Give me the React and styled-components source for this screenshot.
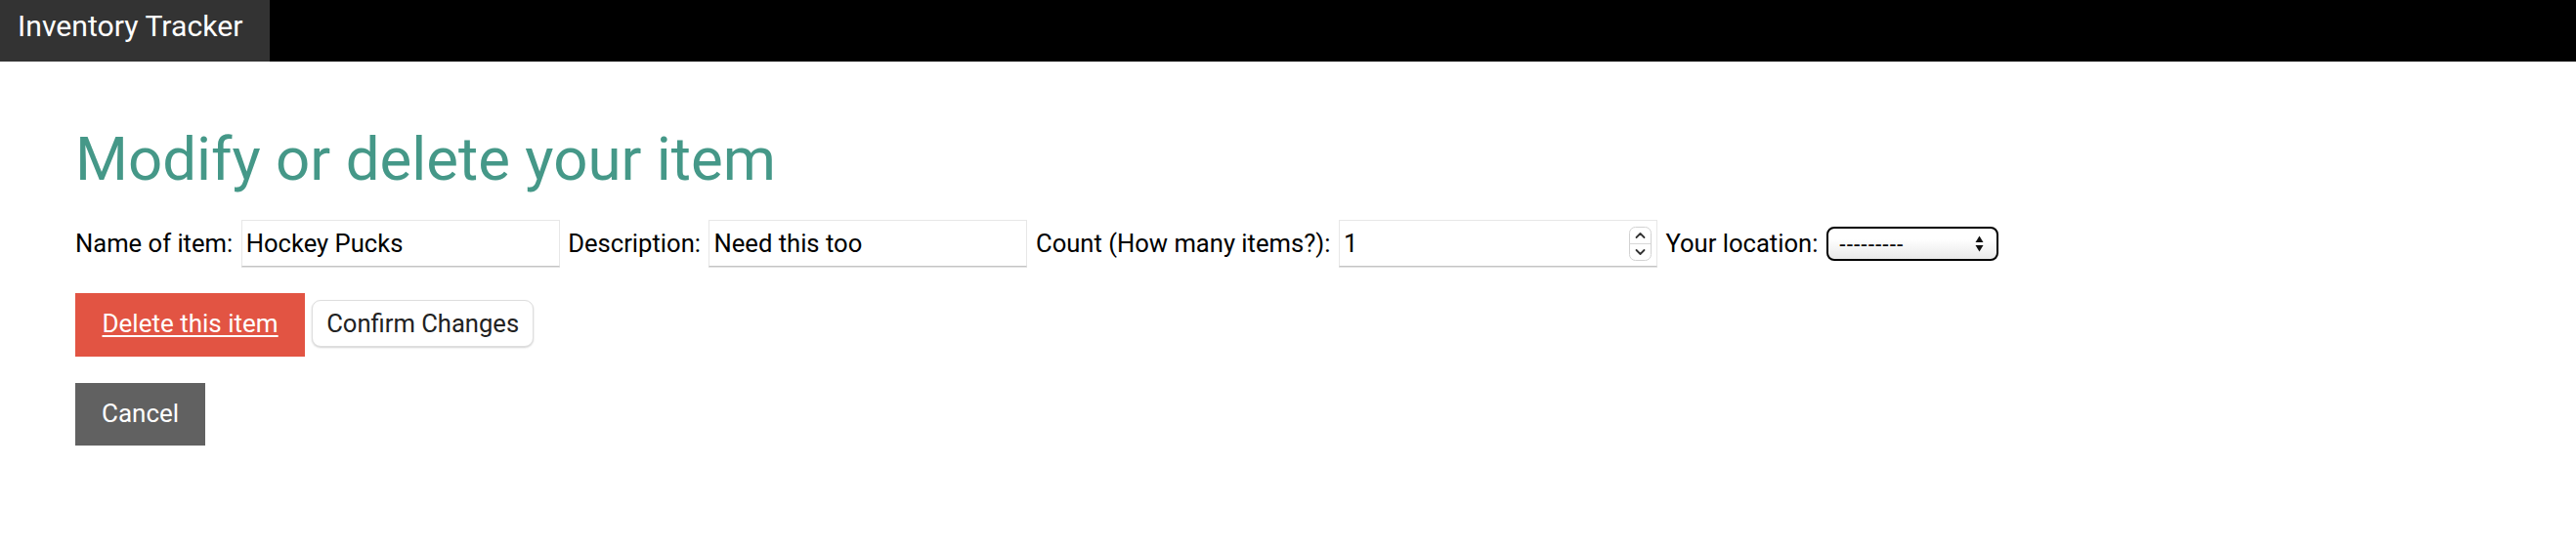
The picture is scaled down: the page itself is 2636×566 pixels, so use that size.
import React from "react";
import styled, { createGlobalStyle } from "styled-components";

const Global = createGlobalStyle`
  html, body { margin: 0; padding: 0; background: #fff; }
  body { font-family: Roboto, "Liberation Sans", Arial, sans-serif; color: #000; }
  * { box-sizing: border-box; }
`;

const NavBar = styled.nav`
  display: flex;
  height: 63px;
  background: #000;
`;

const Brand = styled.a`
  display: block;
  height: 63px;
  width: 276px;
  padding: 9px 0 0 18px;
  background: #333;
  color: #fff;
  font-size: 30.2px;
  line-height: normal;
  text-decoration: none;
  white-space: nowrap;
`;

const Main = styled.main`
  padding: 64px 77px 0;
  display: flex;
  flex-direction: column;
  align-items: flex-start;
`;

const Title = styled.h1`
  margin: 0;
  font-size: 61.8px;
  line-height: 72px;
  font-weight: 400;
  color: #459888;
`;

const Form = styled.form`
  display: flex;
  flex-direction: column;
  align-items: flex-start;
`;

const FieldRow = styled.div`
  margin-top: 26px;
  display: flex;
  align-items: center;
  gap: 8.5px;
  font-size: 25.6px;
`;

const Label = styled.label`
  white-space: nowrap;
`;

const Field = styled.div`
  display: flex;
  align-items: center;
  gap: 8.5px;
`;

const TextInput = styled.input`
  width: 326px;
  height: 48px;
  padding: 0 4px;
  border: 1px solid #e7e7e7;
  border-bottom-color: #c4c4c4;
  box-shadow: 0 1px 0 #e2e2e2;
  font-family: Roboto, "Liberation Sans", Arial, sans-serif;
  font-size: 25.6px;
  color: #000;
  background: #fff;
  outline: none;
`;

const NumberBox = styled.div`
  width: 326px;
  height: 48px;
  display: flex;
  align-items: center;
  padding: 0 5px 0 4px;
  border: 1px solid #e7e7e7;
  border-bottom-color: #c4c4c4;
  box-shadow: 0 1px 0 #e2e2e2;
  background: #fff;
`;

const BareInput = styled.input`
  flex: 1;
  min-width: 0;
  height: 100%;
  border: none;
  padding: 0;
  outline: none;
  font-family: Roboto, "Liberation Sans", Arial, sans-serif;
  font-size: 25.6px;
  color: #000;
  background: transparent;
`;

const Stepper = styled.svg`
  display: block;
  flex: none;
`;

const SelectBox = styled.div`
  width: 176px;
  height: 35px;
  display: flex;
  align-items: center;
  padding: 0 13px 0 11px;
  border: 2px solid #000;
  border-radius: 8px;
  background: linear-gradient(#ffffff, #ffffff 35%, #e9e9e9);
`;

const BareSelect = styled.select`
  flex: 1;
  min-width: 0;
  appearance: none;
  -webkit-appearance: none;
  border: none;
  background: transparent;
  padding: 0;
  outline: none;
  font-family: "Liberation Sans", Arial, sans-serif;
  font-size: 22px;
  color: #000;
`;

const ArrowIcon = styled.svg`
  display: block;
  flex: none;
`;

const ButtonRow = styled.div`
  margin-top: 27px;
  display: flex;
  align-items: baseline;
  gap: 7px;
`;

const FlatButton = styled.a`
  display: inline-block;
  padding: 13.4px ${(p) => p.$padX || "27.5px"};
  font-size: 26px;
  line-height: 37.8px;
  color: #fff;
  background: ${(p) => p.$bg};
  text-decoration: ${(p) => (p.$underline ? "underline" : "none")};
  text-underline-offset: 3px;
  text-decoration-thickness: 2px;
  white-space: nowrap;
  cursor: pointer;
`;

const PushButton = styled.button`
  height: 48px;
  padding: 0 14px;
  border: 1px solid #dedede;
  border-radius: 9px;
  background: #fff;
  box-shadow: 0 1px 2px rgba(0, 0, 0, 0.18);
  font-family: Roboto, "Liberation Sans", Arial, sans-serif;
  font-size: 25.6px;
  line-height: 46px;
  color: #222;
`;

const CancelRow = styled.div`
  margin-top: 27px;
`;

function StepperIcon() {
  return (
    <Stepper width="23" height="35" viewBox="0 0 23 35">
      <rect x="0.5" y="0.5" width="22" height="34" rx="6" fill="#fff" stroke="#d2d2d2" />
      <line x1="1" y1="17.5" x2="22" y2="17.5" stroke="#d8d8d8" />
      <path d="M7.5 11 L11.5 7 L15.5 11" fill="none" stroke="#333" strokeWidth="1.8" strokeLinecap="round" strokeLinejoin="round" />
      <path d="M7.5 24 L11.5 28 L15.5 24" fill="none" stroke="#333" strokeWidth="1.8" strokeLinecap="round" strokeLinejoin="round" />
    </Stepper>
  );
}

function SelectArrows() {
  return (
    <ArrowIcon width="9" height="17" viewBox="0 0 9 17">
      <path d="M4.5 0.5 L8.5 7 L0.5 7 Z" fill="#111" />
      <path d="M4.5 16.5 L8.5 10 L0.5 10 Z" fill="#111" />
    </ArrowIcon>
  );
}

export default function App() {
  return (
    <>
      <Global />
      <NavBar>
        <Brand href="#">Inventory Tracker</Brand>
      </NavBar>
      <Main>
        <Title>Modify or delete your item</Title>
        <Form onSubmit={(e) => e.preventDefault()}>
          <FieldRow>
            <Field>
              <Label htmlFor="name">Name of item:</Label>
              <TextInput id="name" type="text" defaultValue="Hockey Pucks" />
            </Field>
            <Field>
              <Label htmlFor="desc">Description:</Label>
              <TextInput id="desc" type="text" defaultValue="Need this too" />
            </Field>
            <Field>
              <Label htmlFor="count">Count (How many items?):</Label>
              <NumberBox>
                <BareInput id="count" type="text" inputMode="numeric" defaultValue="1" />
                <StepperIcon />
              </NumberBox>
            </Field>
            <Field>
              <Label htmlFor="loc">Your location:</Label>
              <SelectBox>
                <BareSelect id="loc" defaultValue="">
                  <option value="">---------</option>
                </BareSelect>
                <SelectArrows />
              </SelectBox>
            </Field>
          </FieldRow>
          <ButtonRow>
            <FlatButton $bg="#e25443" $underline href="#">Delete this item</FlatButton>
            <PushButton type="submit">Confirm Changes</PushButton>
          </ButtonRow>
          <CancelRow>
            <FlatButton $bg="#616161" $padX="27px">Cancel</FlatButton>
          </CancelRow>
        </Form>
      </Main>
    </>
  );
}
